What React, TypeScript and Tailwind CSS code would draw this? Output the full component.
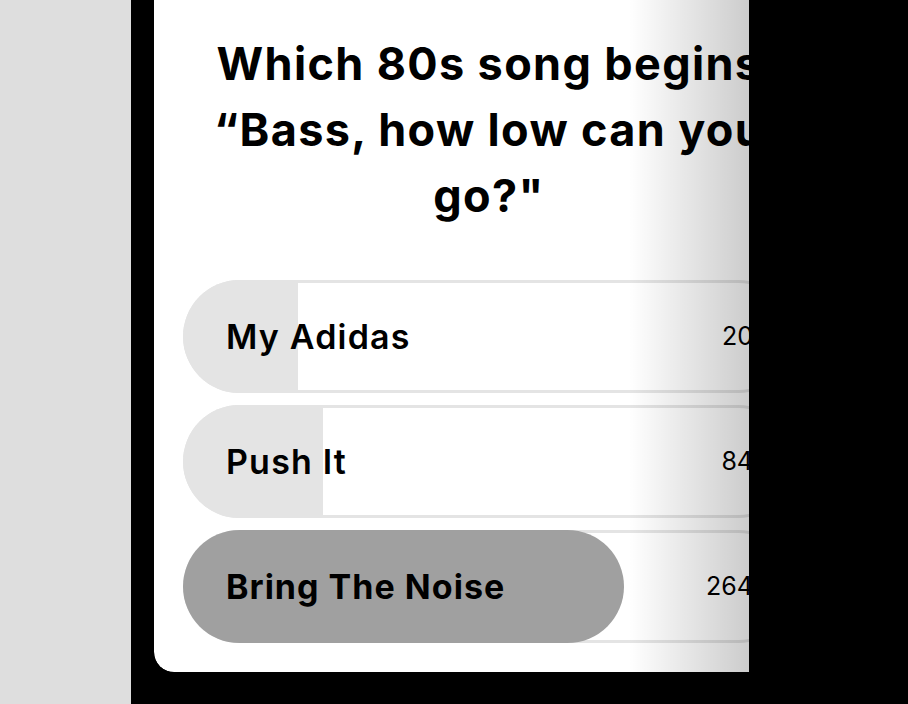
const options = [
  { label: "My Adidas", votes: 20, fill: 115, selected: false },
  { label: "Push It", votes: 84, fill: 140, selected: false },
  { label: "Bring The Noise", votes: 264, fill: 441, selected: true },
];

const PollOption = ({ label, votes, fill, selected }: { label: string; votes: number; fill: number; selected: boolean }) => {
  return (
    <div className="relative h-[113px] rounded-full bg-[#e4e4e4]">
      <div className="absolute inset-[3px] rounded-full bg-white" />
      <div
        className={selected ? "absolute inset-y-0 left-0 rounded-full bg-[#a0a0a0]" : "absolute inset-y-0 left-0 rounded-l-full rounded-r-[3px] bg-[#e4e4e4]"}
        style={{ width: fill }}
      />
      <div className="relative flex h-full items-center justify-between pl-[43px] pr-[42px]">
        <span className={selected ? "text-[34px] font-bold tracking-[0.03em] text-black" : "text-[34px] font-semibold tracking-[0.035em] text-black"}>
          {label}
        </span>
        <span className="text-[25px] text-black">{votes}</span>
      </div>
    </div>
  );
};

export default function App() {
  return (
    <div className="flex h-[704px] w-[908px] overflow-hidden bg-black font-['Inter',sans-serif]">
      <aside className="w-[131px] shrink-0 bg-[#dedede]" />
      <div className="relative ml-[23px] h-[672px] w-[595px] shrink-0 overflow-hidden rounded-bl-[20px]">
        <div className="flex h-full w-[670px] flex-col rounded-bl-[20px] bg-white px-[29px] pb-[29px]">
          <h2 className="pt-[31px] text-center text-[45px] font-bold leading-[66px] tracking-[0.03em] text-black">
            Which 80s song begins
            <br />
            “Bass, how low can you
            <br />
            go?"
          </h2>
          <div className="mt-auto flex flex-col gap-3">
            {options.map((o) => (
              <PollOption key={o.label} {...o} />
            ))}
          </div>
        </div>
        <div className="pointer-events-none absolute inset-y-0 right-0 w-[120px] bg-gradient-to-r from-transparent to-[rgba(0,0,0,0.2)]" />
      </div>
    </div>
  );
}
